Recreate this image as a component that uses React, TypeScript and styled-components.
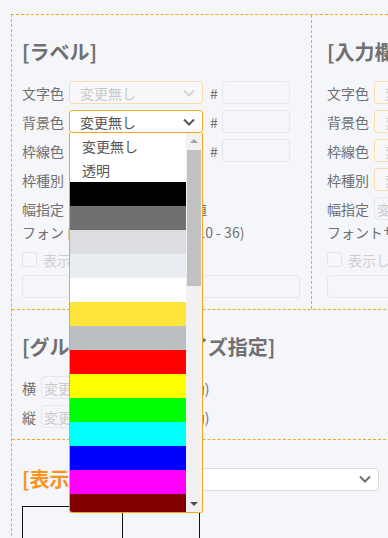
import React from 'react';
import styled, { createGlobalStyle } from 'styled-components';

const ORANGE = '#f5a623';

const GlobalStyle = createGlobalStyle`
  html, body {
    margin: 0;
    padding: 0;
    background: #f5f6fa;
    overflow: hidden;
  }
  body {
    font-family: "Noto Sans CJK JP", "Noto Sans", sans-serif;
    color: #707070;
  }
`;

const swatches = [
  '#000000', '#707070', '#dcdde0', '#e9ecf0', '#ffffff', '#ffe43b', '#bcbfc2',
  '#ff0000', '#ffff00', '#00ff00', '#00ffff', '#0000ff', '#ff00ff', '#800000',
];

const Chevron = ({ color }: { color: string }) => (
  <svg width="12" height="8" viewBox="0 0 12 8">
    <polyline points="1,1.5 6,6.5 11,1.5" fill="none" stroke={color} strokeWidth="2" />
  </svg>
);

const ColorSelect = ({ active, disabled }: { active?: boolean; disabled?: boolean }) => (
  <SelectBox $active={active}>
    <SelectText $disabled={disabled}>変更無し</SelectText>
    <Chevron color={disabled ? '#d4d4d4' : '#555'} />
    {active && (
      <Listbox>
        <Options>
          <Option>変更無し</Option>
          <Option>透明</Option>
          {swatches.map((c) => (
            <Option key={c} $bg={c} />
          ))}
        </Options>
        <Scrollbar>
          <ArrowButton>
            <Triangle $up $color="#a3a3a3" />
          </ArrowButton>
          <Thumb />
          <Track />
          <ArrowButton>
            <Triangle $color="#505050" />
          </ArrowButton>
        </Scrollbar>
      </Listbox>
    )}
  </SelectBox>
);

const ColorRow = ({ label, active, disabled }: { label: string; active?: boolean; disabled?: boolean }) => (
  <FieldRow>
    <Label>{label}</Label>
    <ColorSelect active={active} disabled={disabled} />
    <Hash>#</Hash>
    <TextInput $width={68} readOnly />
  </FieldRow>
);

const StyleColumn = ({ title, withDropdown }: { title: string; withDropdown?: boolean }) => (
  <Column>
    <Heading>{title}</Heading>
    {withDropdown ? (
      <>
        <ColorRow label="文字色" disabled />
        <ColorRow label="背景色" active />
        <ColorRow label="枠線色" disabled />
      </>
    ) : (
      <>
        <FieldRow>
          <Label>文字色</Label>
          <ColorSelect disabled />
        </FieldRow>
        <FieldRow>
          <Label>背景色</Label>
          <ColorSelect disabled />
        </FieldRow>
        <FieldRow>
          <Label>枠線色</Label>
          <ColorSelect disabled />
        </FieldRow>
      </>
    )}
    <FieldRow>
      <Label>枠種別</Label>
      <ColorSelect disabled />
    </FieldRow>
    <FieldRow>
      <Label>幅指定</Label>
      <TextInput $width={88} placeholder="変更無し" readOnly />
      <Note>初期値</Note>
    </FieldRow>
    <FontNote>フォントサイズの調整範囲 (10 - 36)</FontNote>
    <CheckRow>
      <CheckBox />
      <CheckText>表示しない</CheckText>
    </CheckRow>
    <WideInput readOnly />
  </Column>
);

export default function App() {
  return (
    <>
      <GlobalStyle />
      <Frame>
        <TopSection>
          <StyleColumn title="[ラベル]" withDropdown />
          <StyleColumn title="[入力欄]" />
        </TopSection>
        <Section>
          <Heading>[グループエリアサイズ指定]</Heading>
          <FieldRow>
            <Label $width={19}>横</Label>
            <TextInput $width={123} placeholder="変更無し" readOnly />
            <Note>(自動)</Note>
          </FieldRow>
          <FieldRow>
            <Label $width={19}>縦</Label>
            <TextInput $width={123} placeholder="変更無し" readOnly />
            <Note>(自動)</Note>
          </FieldRow>
        </Section>
        <LastSection>
          <PreviewHead>
            <Heading $accent>[表示設定]</Heading>
            <PlainSelect>
              <Chevron color="#6e6e6e" />
            </PlainSelect>
          </PreviewHead>
          <PreviewBox>
            <PreviewCell />
            <PreviewCell />
          </PreviewBox>
        </LastSection>
      </Frame>
    </>
  );
}

const Frame = styled.div`
  margin: 14px 0 0 11px;
  width: 700px;
  min-height: 600px;
  border-top: 1px dashed ${ORANGE};
  border-left: 1px dashed ${ORANGE};
`;

const TopSection = styled.div`
  display: flex;
  border-bottom: 1px dashed ${ORANGE};
`;

const Column = styled.div`
  width: 300px;
  box-sizing: border-box;
  padding: 23px 10px 11px 10px;
  & + & {
    border-left: 1px dashed ${ORANGE};
    padding-left: 15px;
  }
  &:first-child {
    width: 299px;
  }
`;

const Section = styled.div`
  padding: 23px 10px 11px 10px;
  border-bottom: 1px dashed ${ORANGE};
`;

const LastSection = styled.div`
  padding: 25px 10px 0 10px;
`;

const Heading = styled.h2<{ $accent?: boolean }>`
  margin: 0 0 15px 0;
  font-size: 20px;
  line-height: 28px;
  font-weight: 700;
  white-space: nowrap;
  color: ${(p) => (p.$accent ? '#f7941d' : '#707070')};
`;

const FieldRow = styled.div`
  display: flex;
  align-items: center;
  height: 23px;
  & + & {
    margin-top: 6px;
  }
`;

const Label = styled.span<{ $width?: number }>`
  width: ${(p) => p.$width ?? 47}px;
  flex-shrink: 0;
  font-size: 14px;
  white-space: nowrap;
`;

const SelectBox = styled.div<{ $active?: boolean }>`
  position: relative;
  width: 134px;
  height: 23px;
  flex-shrink: 0;
  box-sizing: border-box;
  display: flex;
  align-items: center;
  justify-content: space-between;
  padding: 0 7px 0 10px;
  border: 1px solid ${(p) => (p.$active ? ORANGE : '#fbdcae')};
  border-radius: 3px;
  background: ${(p) => (p.$active ? '#fff' : '#f8f8fa')};
`;

const SelectText = styled.span<{ $disabled?: boolean }>`
  font-size: 14px;
  color: ${(p) => (p.$disabled ? '#c9c9c9' : '#555')};
  white-space: nowrap;
`;

const Listbox = styled.div`
  position: absolute;
  left: -1px;
  top: calc(100% + 1px);
  width: 134px;
  height: 380px;
  box-sizing: border-box;
  display: flex;
  background: #fff;
  border: 1px solid ${ORANGE};
  border-top: none;
  border-radius: 0 0 3px 3px;
  overflow: hidden;
  z-index: 10;
`;

const Options = styled.div`
  flex: 1;
  padding-top: 1px;
  overflow: hidden;
`;

const Option = styled.div<{ $bg?: string }>`
  height: 24px;
  display: flex;
  align-items: center;
  padding-left: 12px;
  font-size: 14px;
  color: #555;
  background: ${(p) => p.$bg ?? '#fff'};
`;

const Scrollbar = styled.div`
  width: 16px;
  display: flex;
  flex-direction: column;
  background: #f1f1f1;
`;

const ArrowButton = styled.div`
  height: 16px;
  display: flex;
  align-items: center;
  justify-content: center;
`;

const Triangle = styled.div<{ $up?: boolean; $color: string }>`
  width: 0;
  height: 0;
  border-left: 4px solid transparent;
  border-right: 4px solid transparent;
  ${(p) =>
    p.$up ? `border-bottom: 4px solid ${p.$color};` : `border-top: 4px solid ${p.$color};`}
`;

const Thumb = styled.div`
  height: 136px;
  margin: 1px 1px 0 1px;
  background: #c1c1c1;
`;

const Track = styled.div`
  flex: 1;
`;

const Hash = styled.span`
  margin: 0 4px 0 7px;
  font-size: 14px;
  color: #707070;
`;

const TextInput = styled.input<{ $width: number }>`
  width: ${(p) => p.$width}px;
  height: 23px;
  box-sizing: border-box;
  flex-shrink: 0;
  padding: 0 2px;
  border: 1px solid #e6e7ec;
  border-radius: 4px;
  background: #f5f6fa;
  font-family: inherit;
  font-size: 14px;
  color: #555;
  outline: none;
  &::placeholder {
    color: #cbcbcb;
  }
`;

const Note = styled.span`
  margin-left: 8px;
  font-size: 14px;
  white-space: nowrap;
`;

const FontNote = styled.div`
  margin-top: 2px;
  font-size: 14px;
  line-height: 20px;
  white-space: nowrap;
`;

const CheckRow = styled.div`
  display: flex;
  align-items: center;
  gap: 6px;
  margin-top: 10px;
  height: 15px;
`;

const CheckBox = styled.span`
  width: 15px;
  height: 15px;
  box-sizing: border-box;
  border: 1px solid #e3e4e8;
  border-radius: 3px;
  background: #f7f8fb;
`;

const CheckText = styled.span`
  font-size: 14px;
  color: #cfcfcf;
`;

const WideInput = styled.input`
  display: block;
  margin-top: 8px;
  width: 278px;
  height: 23px;
  box-sizing: border-box;
  border: 1px solid #e6e7ec;
  border-radius: 4px;
  background: #f5f6fa;
  outline: none;
`;

const PreviewHead = styled.div`
  width: 357px;
  display: flex;
  align-items: center;
  justify-content: space-between;
  & > h2 {
    margin: 0;
  }
`;

const PlainSelect = styled.div`
  width: 250px;
  height: 23px;
  box-sizing: border-box;
  display: flex;
  align-items: center;
  justify-content: flex-end;
  padding-right: 7px;
  border: 1px solid #dcdde2;
  border-radius: 4px;
  background: #fff;
`;

const PreviewBox = styled.div`
  margin-top: 13px;
  width: 178px;
  height: 120px;
  box-sizing: border-box;
  display: grid;
  grid-template-columns: 99px 1fr;
  border: 1px solid #111;
`;

const PreviewCell = styled.div`
  & + & {
    border-left: 1px solid #111;
  }
`;
